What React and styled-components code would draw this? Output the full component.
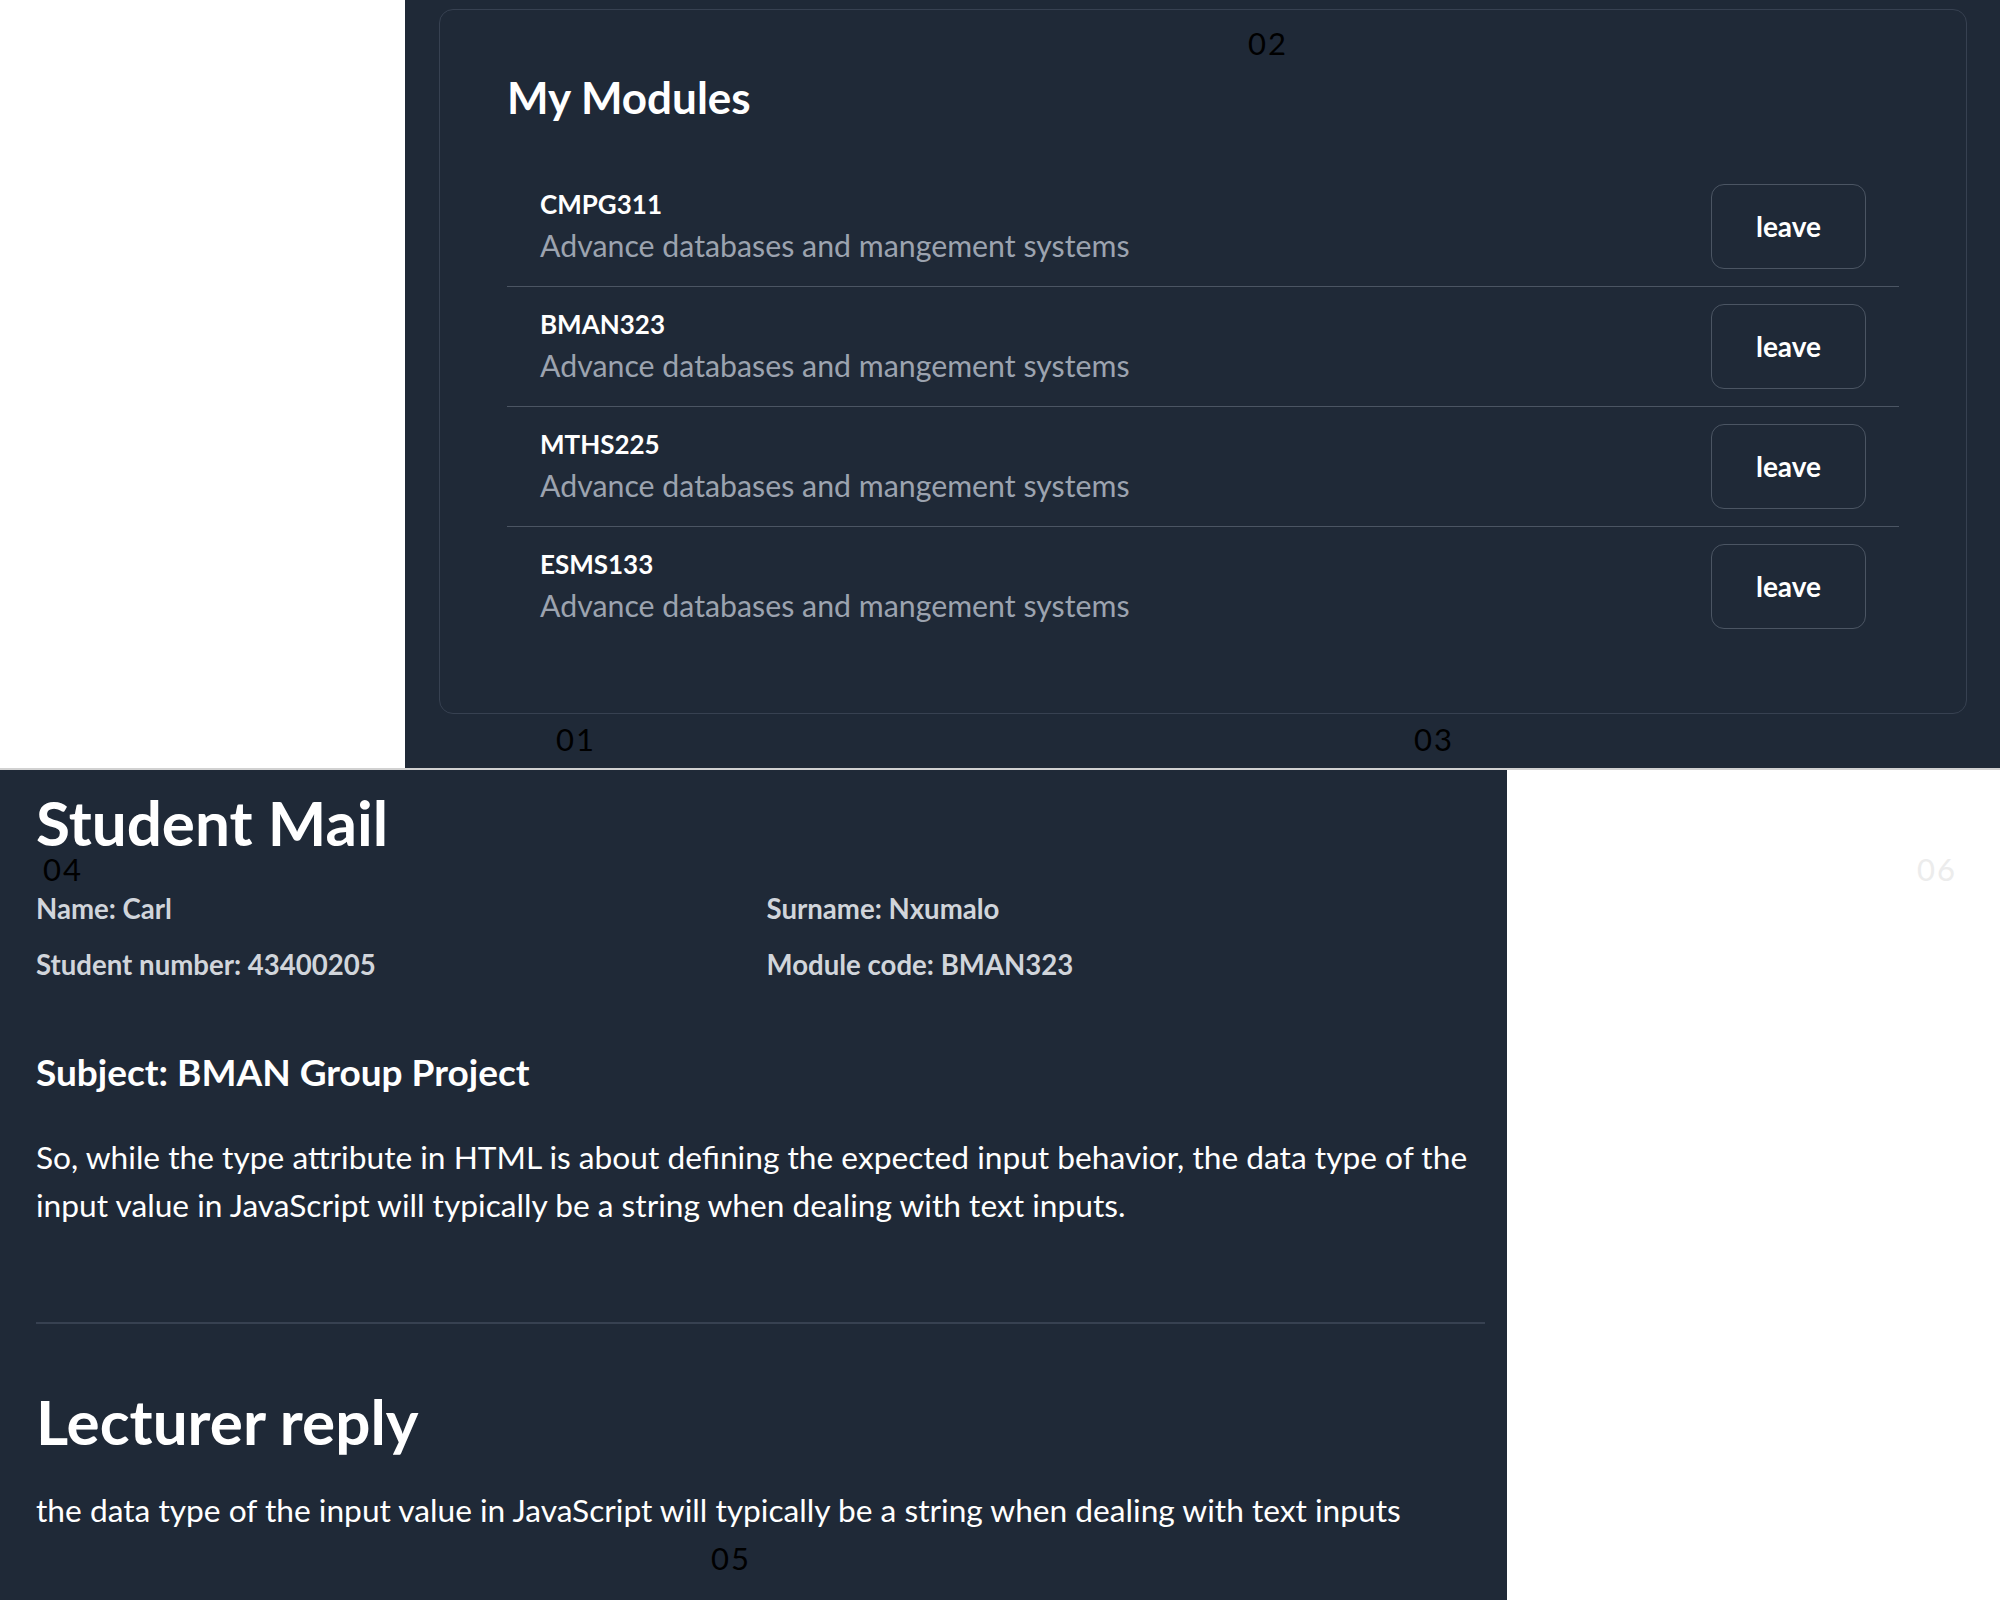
import styled, { createGlobalStyle } from "styled-components";

const GlobalStyle = createGlobalStyle`
  body {
    margin: 0;
    background: #ffffff;
    font-family: "Lato", "Liberation Sans", sans-serif;
  }
  * {
    box-sizing: border-box;
  }
`;

const Page = styled.div`
  position: relative;
  width: 2000px;
  height: 1600px;
  overflow: hidden;
`;

const TopRow = styled.div`
  display: flex;
  height: 768px;
`;

const Blank = styled.div`
  width: ${(p) => p.$w}px;
  flex-shrink: 0;
`;

const TopPanel = styled.div`
  flex: 1;
  background: #1f2937;
  padding: 9px 33px 0 34px;
`;

const Card = styled.div`
  height: 705px;
  border: 1.5px solid #374151;
  border-radius: 14px;
  padding: 60.5px 67px 0 67px;
  color: #fff;
`;

const CardTitle = styled.h2`
  margin: 0 0 43.5px 0;
  font-size: 44px;
  line-height: 1.2;
  font-weight: 700;
`;

const ModuleList = styled.ul`
  list-style: none;
  margin: 0;
  padding: 0;
`;

const ModuleRow = styled.li`
  display: flex;
  align-items: center;
  justify-content: space-between;
  padding: 17px 33px;
  border-bottom: 1px solid #4b5563;

  &:last-child {
    border-bottom: none;
  }
`;

const ModuleText = styled.div`
  display: flex;
  flex-direction: column;
  gap: 7px;
`;

const ModuleCode = styled.span`
  font-size: 26px;
  line-height: 1.2;
  font-weight: 700;
  color: #ffffff;
`;

const ModuleName = styled.span`
  font-size: 30.3px;
  line-height: 1.2;
  color: #9ca3af;
`;

const LeaveButton = styled.button`
  width: 155px;
  height: 85px;
  background: transparent;
  border: 1.5px solid #4b5563;
  border-radius: 13px;
  color: #ffffff;
  font-family: "Lato", "Liberation Sans", sans-serif;
  font-size: 28px;
  font-weight: 700;
  cursor: pointer;
`;

const BottomRow = styled.div`
  display: flex;
  height: 832px;
  border-top: 2px solid #d1d1d1;
`;

const MailPanel = styled.div`
  width: 1507px;
  flex-shrink: 0;
  background: #1f2937;
  padding: 18px 22px 0 36px;
  color: #ffffff;
`;

const MailTitle = styled.h1`
  margin: 0;
  font-size: 62px;
  line-height: 1.1;
  font-weight: 700;
`;

const InfoGrid = styled.div`
  display: grid;
  grid-template-columns: 1fr 1fr;
  column-gap: 12px;
  row-gap: 22.4px;
  margin-top: 36px;
`;

const InfoItem = styled.div`
  font-size: 27.6px;
  line-height: 1.2;
  font-weight: 700;
  color: #d1d5db;
`;

const Subject = styled.h3`
  margin: 69.5px 0 0 0;
  font-size: 37px;
  line-height: 1.2;
  font-weight: 700;
`;

const Body = styled.p`
  margin: 38px 0 0 0;
  font-size: 31.7px;
  line-height: 48px;
`;

const Divider = styled.hr`
  margin: 93px 0 0 0;
  border: none;
  border-top: 2px solid #374151;
`;

const ReplyTitle = styled.h1`
  margin: 60.5px 0 0 0;
  font-size: 62px;
  line-height: 1.2;
  font-weight: 700;
`;

const ReplyText = styled.p`
  margin: 32.5px 0 0 0;
  font-size: 31.7px;
  line-height: 1.2;
`;

const Marker = styled.span`
  position: absolute;
  left: ${(p) => p.$x}px;
  top: ${(p) => p.$y}px;
  font-family: "Lato", "Liberation Sans", sans-serif;
  font-weight: 400;
  font-size: 31px;
  line-height: 22px;
  letter-spacing: 2px;
  color: ${(p) => (p.$light ? "#ececec" : "#000000")};
`;

const modules = [
  { code: "CMPG311", name: "Advance databases and mangement systems" },
  { code: "BMAN323", name: "Advance databases and mangement systems" },
  { code: "MTHS225", name: "Advance databases and mangement systems" },
  { code: "ESMS133", name: "Advance databases and mangement systems" },
];

const App = () => {
  return (
    <>
      <GlobalStyle />
      <Page>
        <TopRow>
          <Blank $w={405} />
          <TopPanel>
            <Card>
              <CardTitle>My Modules</CardTitle>
              <ModuleList>
                {modules.map((m) => (
                  <ModuleRow key={m.code}>
                    <ModuleText>
                      <ModuleCode>{m.code}</ModuleCode>
                      <ModuleName>{m.name}</ModuleName>
                    </ModuleText>
                    <LeaveButton>leave</LeaveButton>
                  </ModuleRow>
                ))}
              </ModuleList>
            </Card>
          </TopPanel>
        </TopRow>

        <BottomRow>
          <MailPanel>
            <MailTitle>Student Mail</MailTitle>
            <InfoGrid>
              <InfoItem>Name: Carl</InfoItem>
              <InfoItem>Surname: Nxumalo</InfoItem>
              <InfoItem>Student number: 43400205</InfoItem>
              <InfoItem>Module code: BMAN323</InfoItem>
            </InfoGrid>
            <Subject>Subject: BMAN Group Project</Subject>
            <Body>
              So, while the type attribute in HTML is about defining the
              expected input behavior, the data type of the input value in
              JavaScript will typically be a string when dealing with text
              inputs.
            </Body>
            <Divider />
            <ReplyTitle>Lecturer reply</ReplyTitle>
            <ReplyText>
              the data type of the input value in JavaScript will typically be
              a string when dealing with text inputs
            </ReplyText>
          </MailPanel>
          <Blank $w={493} />
        </BottomRow>

        <Marker $x={1248} $y={32}>02</Marker>
        <Marker $x={556} $y={728}>01</Marker>
        <Marker $x={1414} $y={728}>03</Marker>
        <Marker $x={43} $y={858}>04</Marker>
        <Marker $x={711} $y={1547}>05</Marker>
        <Marker $x={1917} $y={858} $light>06</Marker>
      </Page>
    </>
  );
};

export default App;
